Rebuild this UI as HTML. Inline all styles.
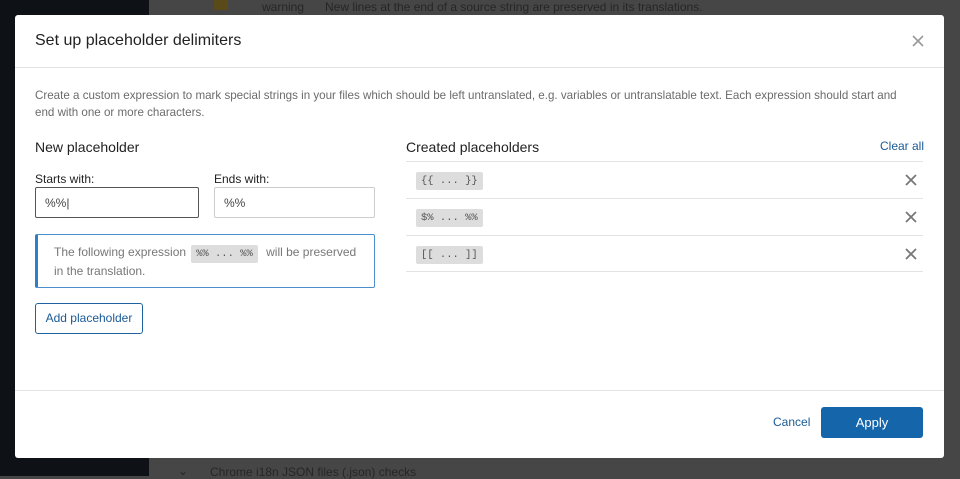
<!DOCTYPE html>
<html><head><meta charset="utf-8"><style>
*{box-sizing:border-box;margin:0;padding:0}
body{width:960px;height:476px;overflow:hidden;background:#464646;font-family:"Liberation Sans",sans-serif;position:relative}
.side{position:absolute;left:0;top:0;width:149px;height:476px;background:#0e1115}
.bgtext{position:absolute;color:#262626;font-size:12px}
.modal{position:absolute;left:15px;top:15px;width:929px;height:443px;background:#fff;border-radius:3px}
.hdr{height:53px;border-bottom:1px solid #e3e3e3;position:relative}
.hdr h1{position:absolute;left:20px;top:17px;font-size:16px;font-weight:normal;color:#222}
.close{position:absolute;right:20px;top:20px}
.desc{position:absolute;left:20px;top:72px;width:880px;font-size:11.6px;line-height:17px;color:#6b6b6b}
.h2{position:absolute;font-size:14px;color:#222}
.lbl{position:absolute;font-size:12px;color:#222}
.inp{position:absolute;height:31px;border:1px solid #ccc;border-radius:2px;font-size:12px;color:#444;padding:8px 9px}
.info{position:absolute;left:20px;top:219px;width:340px;height:54px;border:1px solid #4a90d0;border-left:3px solid #2d7fc8;border-radius:2px;padding:9px 0 0 16px;font-size:12px;line-height:17px;color:#777}
code{font-family:"Liberation Mono",monospace;font-size:10.5px;background:#ddd;color:#555;padding:3px 5px;border-radius:2px;margin:0 5px}
.btn{position:absolute;left:20px;top:288px;width:108px;height:31px;border:1px solid #1e63a0;border-radius:3px;color:#1a5a96;font-size:12px;text-align:center;line-height:29px}
.row{position:absolute;left:391px;width:517px;height:37px;border-top:1px solid #e3e3e3}
.row code{position:absolute;left:10px;top:10px;margin:0}
.row svg{position:absolute;right:6px;top:12px}
.ftr{position:absolute;left:0;top:375px;width:929px;border-top:1px solid #e3e3e3}
.apply{position:absolute;left:806px;top:392px;width:102px;height:31px;background:#1565ab;border-radius:3px;color:#fff;font-size:13px;text-align:center;line-height:31px}
.cancel{position:absolute;left:758px;top:400px;font-size:12px;color:#1a5a96}
</style></head><body>
<div class="side"></div>
<div class="bgtext" style="left:262px;top:0px;">warning</div>
<div class="bgtext" style="left:325px;top:0px;">New lines at the end of a source string are preserved in its translations.</div>
<div style="position:absolute;left:214px;top:0;width:14px;height:10px;background:#5a4a1a"></div>
<div class="bgtext" style="left:178px;top:464px;">⌄</div>
<div class="bgtext" style="left:210px;top:465px;">Chrome i18n JSON files (.json) checks</div>
<div class="modal">
 <div class="hdr"><h1>Set up placeholder delimiters</h1>
 <svg class="close" width="12" height="12" viewBox="0 0 12 12"><path d="M1 1L11 11M11 1L1 11" stroke="#999" stroke-width="1.6"/></svg></div>
 <div class="desc">Create a custom expression to mark special strings in your files which should be left untranslated, e.g. variables or untranslatable text. Each expression should start and<br>end with one or more characters.</div>
 <div class="h2" style="left:20px;top:124px">New placeholder</div>
 <div class="h2" style="left:391px;top:124px">Created placeholders</div>
 <div style="position:absolute;left:865px;top:124px;font-size:12px;color:#1a5a96">Clear all</div>
 <div class="lbl" style="left:20px;top:157px">Starts with:</div>
 <div class="lbl" style="left:199px;top:157px">Ends with:</div>
 <div class="inp" style="left:20px;top:172px;width:164px;border-color:#555">%%|</div>
 <div class="inp" style="left:199px;top:172px;width:161px">%%</div>
 <div class="info">The following expression<code>%% ... %%</code> will be preserved<br>in the translation.</div>
 <div class="btn">Add placeholder</div>
 <div class="row" style="top:146px"><code>{{ ... }}</code><svg width="12" height="12" viewBox="0 0 12 12"><path d="M1 1L11 11M11 1L1 11" stroke="#777" stroke-width="1.8"/></svg></div>
 <div class="row" style="top:183px"><code>$% ... %%</code><svg width="12" height="12" viewBox="0 0 12 12"><path d="M1 1L11 11M11 1L1 11" stroke="#777" stroke-width="1.8"/></svg></div>
 <div class="row" style="top:220px;border-bottom:1px solid #e3e3e3"><code>[[ ... ]]</code><svg width="12" height="12" viewBox="0 0 12 12"><path d="M1 1L11 11M11 1L1 11" stroke="#777" stroke-width="1.8"/></svg></div>
 <div class="ftr"></div>
 <div class="cancel">Cancel</div>
 <div class="apply">Apply</div>
</div>
</body></html>
